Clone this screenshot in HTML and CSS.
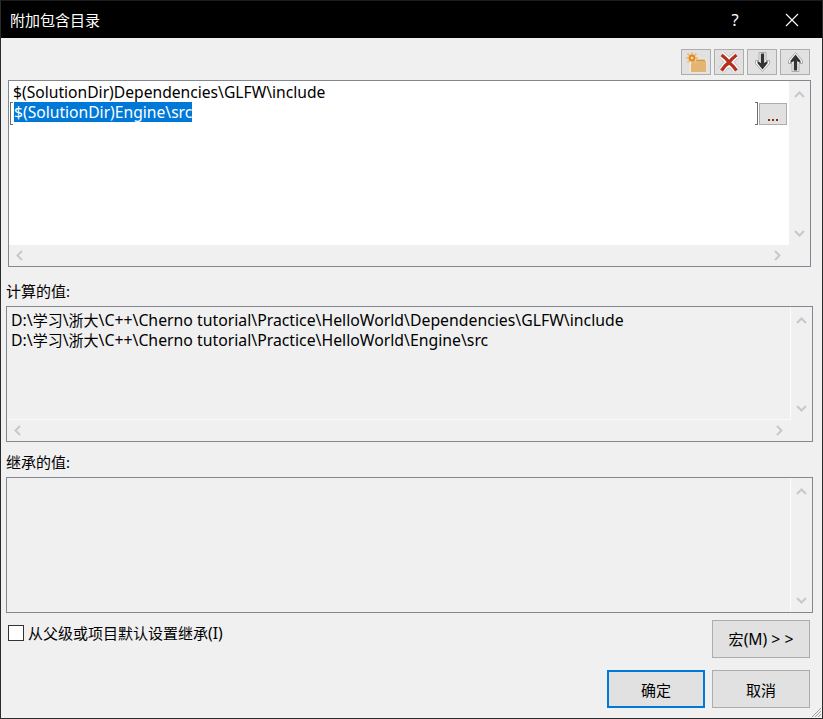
FILE: index.html
```html
<!DOCTYPE html>
<html lang="zh">
<head>
<meta charset="utf-8">
<title>附加包含目录</title>
<link rel="stylesheet" href="styles.css">
</head>
<body>
<div class="window">
  <header class="titlebar">
    <span class="title">附加包含目录</span>
    <span class="help">?</span>
    <svg class="close" width="14" height="14" viewBox="0 0 14 14"><path d="M1 1L13 13M13 1L1 13" stroke="#fff" stroke-width="1.1" fill="none"/></svg>
  </header>
  <main class="content">
    <div class="toolbar">
      <button class="tool"><svg width="28" height="24" viewBox="0 0 28 24"><path d="M7.500 8.500h17v14h-17z" fill="#f5ead6"/><path d="M9 11h15v11H9z" fill="#e2b672"/><path d="M14 9.500h9v1.500h-9z" fill="#d19a52"/><path d="M10 2v12M4 8h12M5.500 3.500l9 9M14.500 3.500l-9 9" stroke="#eec081" stroke-width="1.800"/><circle cx="10" cy="8" r="3.400" fill="#de8a2a"/><circle cx="10" cy="8" r="1.300" fill="#f8dfb4"/></svg></button>
      <button class="tool"><svg width="28" height="24" viewBox="0 0 28 24"><path d="M6.500 5Q12 9 14 12.500Q17 8.500 21.500 5M6.500 20.500Q10 15 14 12.500Q18 15.500 21.500 20.500" stroke="#c9c9c9" stroke-width="8" fill="none"/><path d="M6.500 5Q12 9 14 12.500Q17 8.500 21.500 5M6.500 20.500Q10 15 14 12.500Q18 15.500 21.500 20.500" stroke="#fff" stroke-width="6" fill="none"/><path d="M6.500 5Q12 9 14 12.500Q17 8.500 21.500 5M6.500 20.500Q10 15 14 12.500Q18 15.500 21.500 20.500" stroke="#b5301c" stroke-width="3.400" fill="none"/></svg></button>
      <button class="tool"><svg width="28" height="24" viewBox="0 0 28 24"><path d="M11 2.500h7v8h3.500v3L14.500 21.500 7.500 13.500v-3H11z" fill="#f8f8f8" stroke="#aaa" stroke-width="1"/><path d="M12.800 3.500h3.400v9.500l3.300-2.300v2.500L14.500 19.500 9.500 13.200v-2.500l3.300 2.300z" fill="#333"/></svg></button>
      <button class="tool"><svg width="28" height="24" viewBox="0 0 28 24"><path d="M11 21.500h7v-8h3.500v-3L14.500 2.500 7.500 10.500v3H11z" fill="#f8f8f8" stroke="#aaa" stroke-width="1"/><path d="M12.800 20.500h3.400V11l3.300 2.300v-2.500L14.500 4.500 9.500 10.800v2.500l3.300-2.300z" fill="#333"/></svg></button>
    </div>

    <section class="box box-edit">
      <div class="pane pane-white">
        <div class="line">$(SolutionDir)Dependencies\GLFW\include</div>
        <div class="edit-row">
          <div class="edit"><span class="selected">$(SolutionDir)Engine\src</span></div>
          <button class="browse"><svg width="11" height="3" viewBox="0 0 11 3"><path d="M0 1h2v2H0zM4 1h2v2H4zM8 1h2v2H8z" fill="#8a2b10"/></svg></button>
        </div>
      </div>
      <div class="vbar">
        <svg class="chev" width="11" height="7" viewBox="0 0 11 7"><path d="M1 6l4.500-4.500L10 6" stroke="#c8c8c8" stroke-width="2" fill="none"/></svg>
        <svg class="chev" width="11" height="7" viewBox="0 0 11 7"><path d="M1 1l4.500 4.500L10 1" stroke="#c8c8c8" stroke-width="2" fill="none"/></svg>
      </div>
      <div class="hbar">
        <svg class="chev" width="7" height="11" viewBox="0 0 7 11"><path d="M6 1L1.500 5.500 6 10" stroke="#c8c8c8" stroke-width="2" fill="none"/></svg>
        <svg class="chev" width="7" height="11" viewBox="0 0 7 11"><path d="M1 1l4.500 4.500L1 10" stroke="#c8c8c8" stroke-width="2" fill="none"/></svg>
      </div>
      <div class="corner"></div>
    </section>

    <div class="label label-first">计算的值:</div>
    <section class="box box-eval">
      <div class="pane pane-grey">
        <div class="line">D:\<span class="cjk">学习</span>\<span class="cjk">浙大</span>\C++\Cherno tutorial\Practice\HelloWorld\Dependencies\GLFW\include</div>
        <div class="line">D:\<span class="cjk">学习</span>\<span class="cjk">浙大</span>\C++\Cherno tutorial\Practice\HelloWorld\Engine\src</div>
      </div>
      <div class="vbar">
        <svg class="chev" width="11" height="7" viewBox="0 0 11 7"><path d="M1 6l4.500-4.500L10 6" stroke="#c8c8c8" stroke-width="2" fill="none"/></svg>
        <svg class="chev" width="11" height="7" viewBox="0 0 11 7"><path d="M1 1l4.500 4.500L10 1" stroke="#c8c8c8" stroke-width="2" fill="none"/></svg>
      </div>
      <div class="hbar">
        <svg class="chev" width="7" height="11" viewBox="0 0 7 11"><path d="M6 1L1.500 5.500 6 10" stroke="#c8c8c8" stroke-width="2" fill="none"/></svg>
        <svg class="chev" width="7" height="11" viewBox="0 0 7 11"><path d="M1 1l4.500 4.500L1 10" stroke="#c8c8c8" stroke-width="2" fill="none"/></svg>
      </div>
      <div class="corner"></div>
    </section>

    <div class="label label-second">继承的值:</div>
    <section class="box box-inherit">
      <div class="pane pane-grey"></div>
      <div class="vbar">
        <svg class="chev" width="11" height="7" viewBox="0 0 11 7"><path d="M1 6l4.500-4.500L10 6" stroke="#c8c8c8" stroke-width="2" fill="none"/></svg>
        <svg class="chev" width="11" height="7" viewBox="0 0 11 7"><path d="M1 1l4.500 4.500L10 1" stroke="#c8c8c8" stroke-width="2" fill="none"/></svg>
      </div>
    </section>

    <div class="options">
      <label class="check"><span class="checkbox"></span><span>从父级或项目默认设置继承<span class="latin">(I)</span></span></label>
      <button class="btn"><span>宏<span class="latin">(M) &gt; &gt;</span></span></button>
    </div>
    <div class="actions">
      <button class="btn btn-default">确定</button>
      <button class="btn">取消</button>
    </div>
  </main>
  <svg class="grip" width="12" height="12" viewBox="0 0 12 12"><path d="M11 2L2 11M11 5L5 11M11 8L8 11" stroke="#a0a0a0" stroke-width="1" fill="none"/></svg>
</div>
</body>
</html>
```

FILE: styles.css
```css
* { box-sizing: border-box; }
html, body { margin: 0; padding: 0; }
body {
  width: 823px;
  height: 719px;
  overflow: hidden;
  font-family: "Noto Sans", "Noto Sans CJK SC", sans-serif;
  font-size: 15px;
  color: #000;
}
button { font: inherit; color: inherit; padding: 0; }
.cjk { font-size: 15px; }
.latin { font-size: 15.7px; }
.window {
  position: relative;
  width: 823px;
  height: 719px;
  background: #f0f0f0;
  border: 1px solid #2b2b2b;
  border-top-color: #1c1c1c;
  display: flex;
  flex-direction: column;
}
.titlebar {
  height: 37px;
  flex: none;
  background: #000;
  color: #fff;
  display: flex;
  align-items: center;
  padding-left: 9px;
}
.title { flex: 1; font-size: 15px; }
.help { width: 14px; margin-right: 43px; font-size: 16.5px; text-align: center; }
.close { margin-right: 23px; }
.content {
  flex: 1;
  display: flex;
  flex-direction: column;
  padding: 11px 0 0 0;
}
.toolbar {
  display: flex;
  justify-content: flex-end;
  gap: 3px;
  height: 26px;
  padding-right: 12px;
  flex: none;
}
.tool {
  width: 30px;
  height: 26px;
  background: #e1e1e1;
  border: 1px solid #adadad;
}
.tool svg { display: block; }
.box {
  display: grid;
  grid-template-columns: 1fr 21px;
  grid-template-rows: 1fr 21px;
  border: 1px solid #828790;
  flex: none;
}
.box-edit { height: 187px; margin: 5px 11px 0 7px; }
.box-eval { height: 136px; margin: 0 9px 0 5px; }
.box-inherit { height: 136px; margin: 0 9px 0 5px; grid-template-rows: 1fr; }
.pane { padding-top: 1px; min-width: 0; overflow: hidden; }
.pane-white { background: #fff; padding-left: 4px; }
.pane-grey { padding-left: 4px; padding-top: 3px; border-right: 1px solid #fbfbfb; border-bottom: 1px solid #fbfbfb; }
.box-inherit .pane-grey { border-bottom: 0; }
.line { height: 20px; line-height: 20px; white-space: nowrap; font-size: 15.65px; }
.pane-grey .line { font-size: 15.8px; }
.edit-row {
  display: flex;
  height: 23px;
  padding-right: 2px;
  margin-left: -3px;
}
.edit {
  flex: 1;
  border-left: 1px solid #6d6d6d;
  border-right: 1px solid #6d6d6d;
  background:
    linear-gradient(#6d6d6d, #6d6d6d) left top / 2px 1px no-repeat,
    linear-gradient(#6d6d6d, #6d6d6d) left bottom / 2px 1px no-repeat,
    linear-gradient(#6d6d6d, #6d6d6d) right top / 2px 1px no-repeat,
    linear-gradient(#6d6d6d, #6d6d6d) right bottom / 2px 1px no-repeat;
  padding-left: 3px;
  height: 23px;
  margin-right: 1px;
}
.selected {
  display: inline-block;
  background: #0078d7;
  color: #fff;
  height: 20px;
  line-height: 20px;
  font-size: 15.65px;
}
.browse {
  width: 28px;
  height: 22px;
  margin-top: 1px;
  background: #e1e1e1;
  border: 1px solid #adadad;
  display: flex;
  align-items: flex-end;
  justify-content: center;
  padding-bottom: 3px;
}
.vbar, .hbar { display: flex; align-items: center; justify-content: space-between; }
.vbar { flex-direction: column; padding: 10px 0 8px; }
.hbar { padding: 0 8px 0 7px; }
.label { height: 20px; line-height: 20px; flex: none; margin-left: 5px; }
.label-first { margin-top: 14px; margin-bottom: 5px; }
.label-second { margin-top: 10px; margin-bottom: 5px; }
.options {
  display: flex;
  justify-content: space-between;
  padding: 7px 12px 0 7px;
  height: 45px;
  flex: none;
}
.check { display: flex; align-items: flex-start; gap: 4px; line-height: 20px; padding-top: 3px; }
.checkbox {
  width: 16px;
  height: 16px;
  background: #fff;
  border: 1px solid #333;
  margin-top: 2px;
}
.btn {
  width: 98px;
  height: 38px;
  background: #e1e1e1;
  border: 1px solid #adadad;
}
.actions {
  display: flex;
  justify-content: flex-end;
  gap: 7px;
  padding: 12px 12px 0 0;
}
.btn-default { border: 2px solid #0078d7; }
.grip { position: absolute; right: 0; bottom: 0; }
```
